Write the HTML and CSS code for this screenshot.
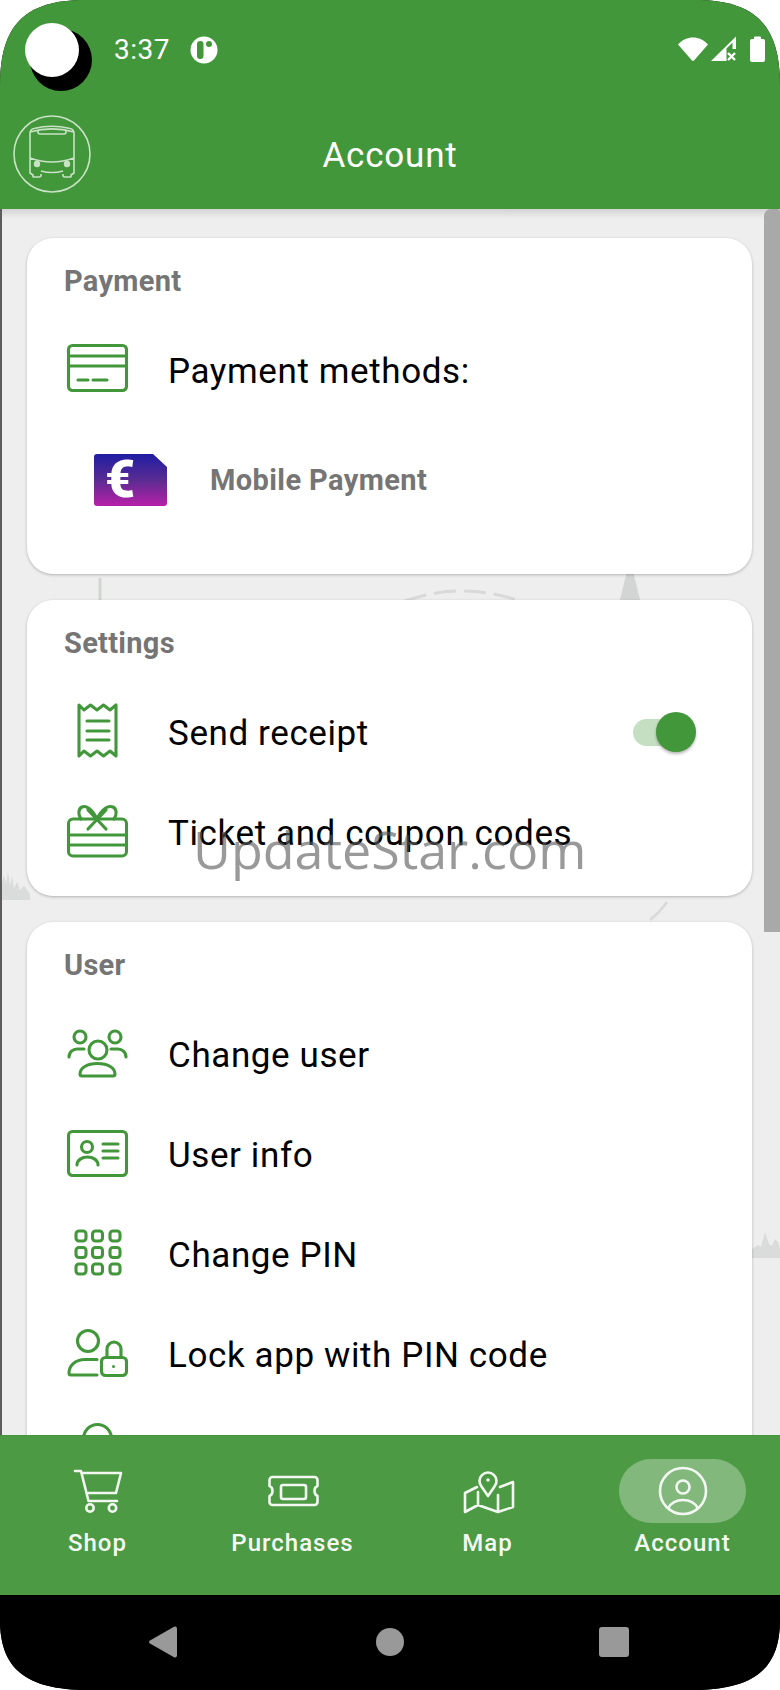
FILE: index.html
```html
<!DOCTYPE html>
<html lang="en">
<head>
<meta charset="utf-8">
<title>Account</title>
<link rel="stylesheet" href="styles.css">
</head>
<body>
<div class="phone">
  <div class="blob-back"></div>
  <div class="blob-front"></div>
  <header class="top">
    <div class="status">
      <span class="time">3:37</span>
      <svg class="note" viewBox="0 0 28 28"><circle cx="14" cy="14" r="13.5" fill="#fff"/><rect x="7" y="5" width="6.500" height="18" rx="3.200" fill="#43973b"/><circle cx="19" cy="8" r="3" fill="#43973b"/></svg>
      <svg class="sys" viewBox="0 0 92 30">
        <path class="white" d="M1 10.500C9 1 23 1 31 10.500L17.200 26.200a1.500 1.500 0 0 1-2.400 0z"/>
        <path class="white" fill-rule="evenodd" d="M34 27 59 2.500V15h-3.500V8.500l-6 6V27z"/>
        <path class="cross" d="M51 19l7 7M58 19l-7 7"/>
        <path class="white" d="M77 3.500a1 1 0 0 1 1-1h5a1 1 0 0 1 1 1V5h2a2 2 0 0 1 2 2v19a2 2 0 0 1-2 2H75a2 2 0 0 1-2-2V7a2 2 0 0 1 2-2h2z"/>
      </svg>
    </div>
    <div class="toolbar">
      <svg class="logo" viewBox="0 0 80 80">
        <circle cx="40" cy="40" r="38"/>
        <path d="M18 44V20c0-3 1-5 4-5.500 12-3 24-3 36 0 3 .5 4 2.500 4 5.500v24"/>
        <path d="M18 18c14-4 30-4 44 0M26 16v2a2 2 0 0 0 2 2h24a2 2 0 0 0 2-2v-2"/>
        <path d="M18 44c14 5 30 5 44 0M18 44v15l3 2v1.500a1 1 0 0 0 1 .5h5a2 2 0 0 0 2-2v-1M62 44v15l-3 2v1.500a1 1 0 0 1-1 .5h-5a2 2 0 0 1-2-2v-1M29 57c7 2 15 2 22 0"/>
        <circle class="lamp" cx="25" cy="50" r="3.200"/><circle class="lamp" cx="55" cy="50" r="3.200"/>
      </svg>
      <h1 class="title">Account</h1>
    </div>
  </header>

  <main class="content">
    <svg class="backdrop" viewBox="0 0 780 1226">
      <path class="back-line" d="M100 369v24"/>
      <path class="back-dash" d="M405 392q57-20 115 0"/>
      <path class="back-fill" d="M630 350l-10.500 42.500h21z"/>
      <path class="back-sky" d="M0 691h30v-6l-6-8-4 4-3-8-3 6-2-12-2 10-2-14-2 12-2-9-2 8-2-4z"/>
      <path class="back-curve" d="M650 711q10-8 17-18"/>
      <path class="back-sky" d="M752 1049v-9l6-4 3 2 4-15 4 12 3 2 3-7 3 3 2 7v9z"/>
    </svg>
    <section class="card">
      <h2 class="card-title">Payment</h2>
      <div class="row">
        <svg class="icon" viewBox="0 0 60 60"><rect x="1.500" y="5.500" width="58" height="45" rx="4"/><path d="M1.500 16h58M1.500 26h58M11 40h10M26 40h14"/></svg>
        <span class="label">Payment methods:</span>
      </div>
      <div class="pay-row">
        <svg class="sim" viewBox="0 0 73 52">
          <defs><linearGradient id="simfill" x1="0" y1="0" x2="0" y2="1"><stop offset="0" stop-color="#1f1da4"/><stop offset=".5" stop-color="#5a2c92"/><stop offset="1" stop-color="#b820a8"/></linearGradient></defs>
          <path d="M3 0h56l14 13v36a3 3 0 0 1-3 3H3a3 3 0 0 1-3-3V3a3 3 0 0 1 3-3z" fill="url(#simfill)"/>
          <text class="euro" x="11" y="43">€</text>
        </svg>
        <span class="pay-label">Mobile Payment</span>
      </div>
    </section>
    <section class="card">
      <h2 class="card-title">Settings</h2>
      <div class="row">
        <svg class="icon" viewBox="0 0 60 60"><path d="M12 3l5 5 6.500-5L30 8l6.500-5L43 8l6-5v51l-6-5-6.500 5-6.500-5-6.500 5-6.500-5-5 5z"/><path d="M20 19h22M20 29h22M20 38h22"/></svg>
        <span class="label">Send receipt</span>
        <div class="switch"><div class="thumb"></div></div>
      </div>
      <div class="row">
        <svg class="icon" viewBox="0 0 60 60"><rect x="1.500" y="17" width="58" height="37" rx="4.500"/><path d="M1.500 33h58M1.500 43h58M21 27l18-19M39 27L21 8"/><path d="M30 17C25 7 19 3 15 5c-4 2-4 8-1 12M30 17C35 7 41 3 46 5c4 2 4 8 1 12"/></svg>
        <span class="label">Ticket and coupon codes</span>
      </div>
    </section>
    <section class="card">
      <h2 class="card-title">User</h2>
      <div class="row">
        <svg class="icon" viewBox="0 0 60 60"><circle cx="13" cy="13" r="6"/><circle cx="48" cy="13" r="6"/><circle cx="31" cy="26" r="9"/><path d="M2 33c0-5 4-8 8-8h7M59 33c0-5-4-8-8-8h-7"/><path d="M15 52a2 2 0 0 1-2-2c0-6 7-10.500 17.500-10.500S48 44 48 50a2 2 0 0 1-2 2z"/></svg>
        <span class="label">Change user</span>
      </div>
      <div class="row">
        <svg class="icon" viewBox="0 0 60 60"><rect x="1.500" y="7.500" width="58" height="44" rx="4"/><circle cx="20" cy="23" r="5.500"/><path d="M10 41c0-5 5-8 10.500-8S31 36 31 41M36 20h15M36 27h15M36 34h15"/></svg>
        <span class="label">User info</span>
      </div>
      <div class="row">
        <svg class="icon" viewBox="0 0 60 60"><rect x="9" y="7" width="10" height="10" rx="3"/><rect x="25.500" y="7" width="10" height="10" rx="3"/><rect x="43" y="7" width="10" height="10" rx="3"/><rect x="9" y="23.500" width="10" height="10" rx="3"/><rect x="25.500" y="23.500" width="10" height="10" rx="3"/><rect x="43" y="23.500" width="10" height="10" rx="3"/><rect x="9" y="40" width="10" height="10" rx="3"/><rect x="25.500" y="40" width="10" height="10" rx="3"/><rect x="43" y="40" width="10" height="10" rx="3"/></svg>
        <span class="label">Change PIN</span>
      </div>
      <div class="row">
        <svg class="icon" viewBox="0 0 60 60"><circle cx="21" cy="17" r="10.500"/><path d="M30 35.500H18C8 35.500 2 42 2 49a2 2 0 0 0 2 2h26"/><rect x="34.500" y="33.500" width="25" height="18" rx="4"/><path d="M40 33v-8a6.500 6.500 0 0 1 14 0v8"/><circle class="dot" cx="46.500" cy="42.500" r="1.500"/></svg>
        <span class="label">Lock app with PIN code</span>
      </div>
      <div class="row">
        <svg class="icon" viewBox="0 0 60 60"><circle cx="30.500" cy="14.500" r="14"/></svg>
      </div>
    </section>
    <div class="scrollbar"></div>
    <div class="watermark">UpdateStar.com</div>
  </main>

  <nav class="tabs">
    <div class="tab">
      <div class="tab-icon"><svg viewBox="0 0 64 64"><path d="M9 12h6l7.500 30H51M16.500 14H55l-5 20H20.500"/><circle cx="24" cy="49" r="3.700"/><circle cx="46.500" cy="49" r="3.700"/></svg></div>
      <span class="tab-label">Shop</span>
    </div>
    <div class="tab">
      <div class="tab-icon"><svg viewBox="0 0 64 64"><path d="M11.500 18h42a3 3 0 0 1 3 3v6q-3 1-3 5t3 5v6a3 3 0 0 1-3 3h-42a3 3 0 0 1-3-3v-6q3-1 3-5t-3-5v-6a3 3 0 0 1 3-3z"/><rect x="20" y="26" width="25" height="14" rx="2"/></svg></div>
      <span class="tab-label">Purchases</span>
    </div>
    <div class="tab">
      <div class="tab-icon"><svg viewBox="0 0 64 64"><path d="M32 37l-6.500-9.500a8.500 8.500 0 1 1 13 0z"/><circle class="dot-w" cx="32" cy="21" r="1.800"/><path d="M21 28l-12 6v19l13-7 20 7 15-5V23l-13 5M22 33v13M42 36v17"/></svg></div>
      <span class="tab-label">Map</span>
    </div>
    <div class="tab tab-active">
      <div class="tab-icon"><svg viewBox="0 0 64 64"><circle cx="32" cy="32" r="23"/><circle cx="32" cy="28" r="6.500"/><path d="M17.500 49c2-5 8-8 14.500-8s12.500 3 14.500 8"/></svg></div>
      <span class="tab-label">Account</span>
    </div>
  </nav>

  <footer class="softkeys">
    <svg class="key-back" viewBox="0 0 28 32"><path d="M1 14.500 25 .8a2 2 0 0 1 3 1.700v27a2 2 0 0 1-3 1.700L1 17.500a1.700 1.700 0 0 1 0-3z"/></svg>
    <div class="key-home"></div>
    <div class="key-recent"></div>
  </footer>
</div>
</body>
</html>
```

FILE: styles.css
```css
* { box-sizing: border-box; }
html, body { margin: 0; padding: 0; background: #fff; }
body { font-family: Roboto, "Liberation Sans", sans-serif; }

.phone {
  position: relative;
  width: 780px;
  height: 1690px;
  display: flex;
  flex-direction: column;
  overflow: hidden;
  clip-path: path("M85 0H695C755 0 780 25 780 85V1620C780 1668 755 1690 692 1690H88C25 1690 0 1668 0 1620V85C0 25 25 0 85 0Z");
  background: #000;
}

.blob-back, .blob-front { position: absolute; border-radius: 50%; z-index: 3; }
.blob-back { left: 30px; top: 29px; width: 62px; height: 62px; background: #000; }
.blob-front { left: 25px; top: 23px; width: 54px; height: 54px; background: #fff; }

.top { background: #43973b; height: 209px; flex: none; }
.status { height: 100px; position: relative; display: flex; align-items: center; padding-left: 114px; }
.time { color: #fff; font-size: 28px; letter-spacing: .5px; line-height: 30px; width: 76px; }
.note { width: 28px; height: 28px; }
.sys { width: 92px; height: 30px; margin-left: auto; margin-right: 11px; margin-top: -3px; }
.white { fill: #fff; }
.cross { fill: none; stroke: #fff; stroke-width: 2.4; }

.toolbar { height: 109px; position: relative; display: flex; align-items: center; justify-content: center; padding: 12px 0 10px; }
.logo { position: absolute; left: 11.500px; top: 13.500px; width: 80px; height: 80px; fill: none; stroke: #c9e2c6; stroke-width: 1.6; }
.lamp { fill: #c9e2c6; stroke: none; }
.title { margin: 0; color: #fff; font-size: 35px; font-weight: 400; letter-spacing: .8px; line-height: 40px; }

.content {
  position: relative;
  flex: 1;
  min-height: 0;
  overflow: hidden;
  background: #eeeeee;
  padding: 29px 28px 0 25px;
  display: flex;
  flex-direction: column;
  gap: 26px;
  border-left: 2px solid #5c5c5c;
}
.content::before {
  content: "";
  position: absolute;
  left: 0; right: 0; top: 0;
  height: 10px;
  background: linear-gradient(#d4d4d4, #eeeeee);
}
.backdrop { position: absolute; left: -2px; top: 0; width: 780px; height: 1226px; }
.back-line { fill: none; stroke: #d2d4d2; stroke-width: 3; }
.back-dash { fill: none; stroke: #d8d9d8; stroke-width: 3; stroke-dasharray: 22 8; }
.back-curve { fill: none; stroke: #d8d9d8; stroke-width: 2.500; }
.back-fill { fill: #d3d5d4; }
.back-sky { fill: #dadcdb; }

.card {
  position: relative;
  flex: none;
  background: #fff;
  border-radius: 26px;
  padding: 23px 0 14px 37px;
  box-shadow: 0 1px 3px rgba(0, 0, 0, .25);
}
.card-title { margin: 0 0 19px; color: #757575; font-size: 29px; font-weight: 700; letter-spacing: .3px; line-height: 40px; }

.row { height: 100px; display: flex; align-items: center; gap: 41px; padding-left: 3px; padding-right: 62px; }
.icon { width: 60px; height: 60px; flex: none; overflow: visible; fill: none; stroke: #43973b; stroke-width: 3.100; stroke-linecap: round; stroke-linejoin: round; }
.icon .dot { fill: #43973b; stroke: none; }
.label { font-size: 35px; letter-spacing: .6px; line-height: 40px; margin-top: 3px; color: #000; }

.pay-row { height: 140px; padding-bottom: 20px; display: flex; align-items: center; gap: 43px; padding-left: 30px; }
.sim { width: 73px; height: 52px; flex: none; overflow: visible; }
.euro { font-family: Roboto, sans-serif; font-size: 52px; font-weight: 900; fill: #fff; }
.pay-label { font-size: 29px; font-weight: 700; letter-spacing: .4px; color: #757575; }

.switch { position: relative; margin-left: auto; width: 57px; height: 27px; border-radius: 14px; background: #c5dfc2; }
.thumb { position: absolute; right: -6px; top: -7px; width: 40px; height: 40px; border-radius: 50%; background: #43973b; box-shadow: 0 2px 3px rgba(0, 0, 0, .28); }

.scrollbar { position: absolute; right: 0; top: 0; width: 16px; height: 723px; background: #a9a9a9; border-radius: 7px 3px 0 0; }
.watermark { position: absolute; left: 191px; top: 610px; font-family: "Open Sans", sans-serif; font-size: 52px; line-height: 60px; color: rgba(90, 90, 90, .62); white-space: nowrap; }

.tabs { flex: none; height: 160px; background: #4d9a44; border-top: 1px solid #43973b; display: grid; grid-template-columns: repeat(4, 195px); position: relative; z-index: 1; }
.tab { display: flex; flex-direction: column; align-items: center; padding-top: 23px; }
.tab-icon { width: 127px; height: 64px; border-radius: 32px; display: flex; justify-content: center; }
.tab-icon svg { width: 64px; height: 64px; fill: none; stroke: #f2f8f1; stroke-width: 2.6; stroke-linecap: round; stroke-linejoin: round; }
.tab-icon .dot-w { fill: #f2f8f1; stroke: none; }
.tab-active .tab-icon { background: rgba(255, 255, 255, .3); }
.tab-label { margin-top: 4px; color: #f4f9f3; font-size: 24px; font-weight: 500; letter-spacing: 1px; line-height: 32px; }

.softkeys { flex: none; height: 95px; background: #000; display: flex; align-items: center; padding-left: 149px; padding-bottom: 2px; }
.key-back { width: 28px; height: 32px; fill: #999; }
.key-home { width: 28px; height: 28px; margin-left: 199px; border-radius: 50%; background: #999; }
.key-recent { width: 30px; height: 30px; margin-left: 195px; border-radius: 3px; background: #999; }
```
